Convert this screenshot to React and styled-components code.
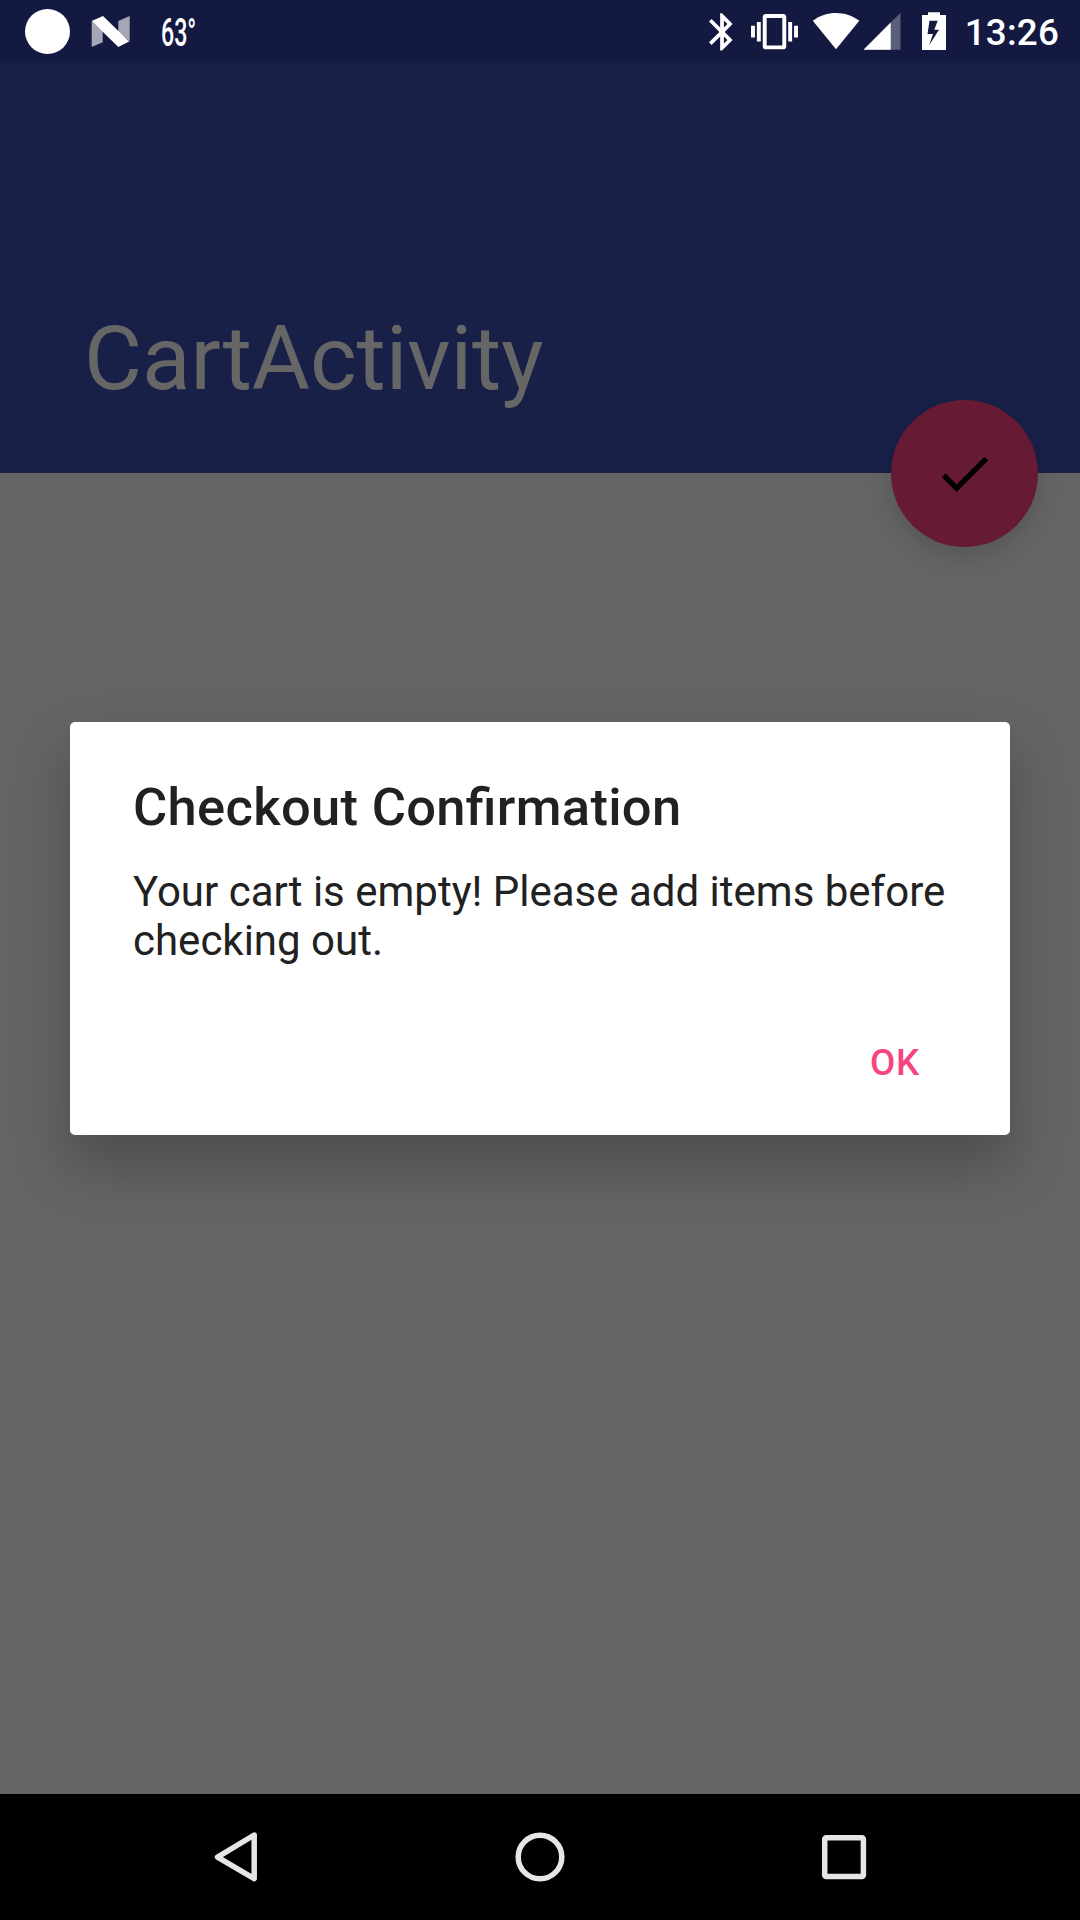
import React from 'react';
import styled, { createGlobalStyle } from 'styled-components';

const GlobalStyle = createGlobalStyle`
  * { box-sizing: border-box; }
  html, body { margin: 0; padding: 0; background: #646464; }
  body { font-family: Roboto, "Noto Sans", sans-serif; }
`;

const Screen = styled.div`
  position: relative;
  display: flex;
  flex-direction: column;
  width: 1080px;
  height: 1920px;
  overflow: hidden;
  background: #646464;
`;

const StatusBar = styled.header`
  display: flex;
  justify-content: space-between;
  height: 63px;
  flex: none;
  padding: 0 21px 0 25px;
  background: #131940;
  color: #fff;
`;

const StatusGroup = styled.div`
  display: flex;
  align-items: flex-start;
`;

const StatusIcon = styled.svg`
  display: block;
  flex: none;
  width: ${(p) => p.$w}px;
  height: 63px;
  margin-left: ${(p) => p.$gap || 0}px;
  fill: #fff;
`;

const Temperature = styled.div`
  display: flex;
  width: 36px;
  margin-left: 31px;
  font-size: 38px;
  font-weight: 500;
  line-height: 66px;
  transform: scaleX(0.61);
  transform-origin: 0 0;
`;

const Clock = styled.time`
  margin-left: 19px;
  font-size: 36.75px;
  font-weight: 500;
  letter-spacing: 0.2px;
  line-height: 66px;
`;

const AppBar = styled.section`
  position: relative;
  display: flex;
  align-items: flex-end;
  flex: none;
  height: 410px;
  padding: 0 84px 62px;
  background: #192048;
`;

const Heading = styled.h1`
  margin: 0;
  color: #666;
  font-size: 89.25px;
  font-weight: 400;
  letter-spacing: -0.1px;
  line-height: 104px;
`;

const Fab = styled.button`
  position: absolute;
  right: 42px;
  bottom: -74px;
  display: grid;
  place-items: center;
  width: 147px;
  height: 147px;
  padding: 0;
  border: 0;
  border-radius: 50%;
  background: #661a34;
  box-shadow: 0 8px 22px rgba(0, 0, 0, 0.15);
`;

const Content = styled.main`
  flex: 1;
`;

const DialogLayer = styled.div`
  position: absolute;
  inset: 63px 0 126px;
  display: grid;
  place-items: center;
`;

const Dialog = styled.div`
  display: flex;
  flex-direction: column;
  width: 940px;
  height: 413px;
  padding: 54px 63px 0;
  border-radius: 5px;
  background: #fff;
  color: #212121;
  box-shadow: 0 29px 56px rgba(0, 0, 0, 0.24);
`;

const DialogTitle = styled.h2`
  margin: 0;
  font-size: 52.5px;
  font-weight: 500;
  font-feature-settings: "liga" 1;
  letter-spacing: 0.31px;
  line-height: 62px;
`;

const Message = styled.p`
  margin: 29px 0 0;
  font-size: 42px;
  line-height: 49px;
  white-space: nowrap;
`;

const Actions = styled.div`
  display: flex;
  justify-content: flex-end;
  margin-top: 49px;
`;

const TextButton = styled.button`
  padding: 0 27px;
  border: 0;
  background: none;
  color: #f84582;
  font: 500 36.75px/98px Roboto, "Noto Sans", sans-serif;
  letter-spacing: 0.7px;
`;

const NavBar = styled.nav`
  display: flex;
  justify-content: center;
  align-items: center;
  gap: 179px;
  flex: none;
  height: 126px;
  background: #000;
`;

const NavIcon = styled.svg`
  display: block;
  width: 125px;
  height: 126px;
  fill: none;
  stroke: #e6e6e6;
  stroke-width: 5.5;
  stroke-linejoin: round;
`;

export default function App() {
  return (
    <Screen>
      <GlobalStyle />
      <StatusBar>
        <StatusGroup>
          <StatusIcon $w={45} viewBox="25 0 45 63">
            <circle cx="47.5" cy="31.5" r="22.5" />
          </StatusIcon>
          <StatusIcon $w={39} $gap={21} viewBox="91 0 39 63">
            <path d="M91.7 21L102.7 31.5V42.3L91.7 47ZM118.3 21L129.7 16V41.5L118.3 31.5Z" opacity="0.62" />
            <path d="M91.7 21L103 16L129.2 41.5L118.3 47Z" />
          </StatusIcon>
          <Temperature>63°</Temperature>
        </StatusGroup>
        <StatusGroup>
          <StatusIcon $w={24} viewBox="709 0 24 63">
            <g transform="translate(699.7 9.6) scale(1.86)">
              <path d="M17.71 7.71L12 2h-1v7.59L6.41 5 5 6.41 10.59 12 5 17.59 6.41 19 11 14.41V22h1l5.71-5.71-4.3-4.29 4.3-4.29zM13 5.83l1.88 1.88L13 9.59V5.83zm1.88 10.46L13 18.17v-3.76l1.88 1.88z" />
            </g>
          </StatusIcon>
          <StatusIcon $w={47} $gap={18} viewBox="751 0 47 63">
            <g transform="translate(751 8.2) scale(1.958)">
              <path d="M0 15h2V9H0v6zm3 2h2V7H3v10zm19-8v6h2V9h-2zm-3 8h2V7h-2v10zM16.5 3h-9C6.67 3 6 3.67 6 4.5v15c0 .83.67 1.5 1.5 1.5h9c.83 0 1.5-.67 1.5-1.5v-15c0-.83-.67-1.5-1.5-1.5zM16 19H8V5h8v14z" />
            </g>
          </StatusIcon>
          <StatusIcon $w={47} $gap={15} viewBox="813 0 47 63">
            <path d="M836 49.3L812.8 20.7C819.5 15.6 827.5 12.9 836 12.9S852.500 15.6 859.300 20.7Z" />
          </StatusIcon>
          <StatusIcon $w={37} $gap={4} viewBox="864 0 37 63">
            <path d="M863.500 49.700L900.500 12.700V49.700Z" opacity="0.3" />
            <path d="M863.500 49.700L890.700 22.500V49.700Z" />
          </StatusIcon>
          <StatusIcon $w={24} $gap={21} viewBox="922 0 24 63">
            <path fillRule="evenodd" d="M928 12.200H940V15H946V50H922V15H928ZM929.500 20.700L927.500 34H933L929 45.500L939 29.700H934.300L937.700 20.700Z" />
          </StatusIcon>
          <Clock>13:26</Clock>
        </StatusGroup>
      </StatusBar>
      <AppBar>
        <Heading>CartActivity</Heading>
        <Fab aria-label="Check out">
          <svg width="63" height="63" viewBox="0 0 24 24">
            <path d="M9 16.170L4.830 12l-1.420 1.410L9 19 21 7l-1.410-1.410z" />
          </svg>
        </Fab>
      </AppBar>
      <Content />
      <NavBar>
        <NavIcon viewBox="174 1794 125 126">
          <path d="M254.200 1835L217.500 1857.200L254.200 1878.700Z" />
        </NavIcon>
        <NavIcon viewBox="478 1794 125 126">
          <circle cx="540" cy="1857" r="21.800" />
        </NavIcon>
        <NavIcon viewBox="782 1794 125 126">
          <rect x="824.700" y="1837.700" width="38.700" height="38.700" rx="1.500" />
        </NavIcon>
      </NavBar>
      <DialogLayer>
        <Dialog role="dialog">
          <DialogTitle>Checkout Confirmation</DialogTitle>
          <Message>
            Your cart is empty! Please add items before
            <br />
            checking out.
          </Message>
          <Actions>
            <TextButton>OK</TextButton>
          </Actions>
        </Dialog>
      </DialogLayer>
    </Screen>
  );
}
